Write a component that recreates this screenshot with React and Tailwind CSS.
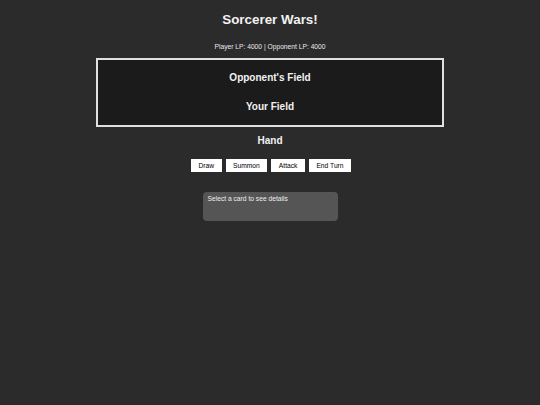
import React from "react";

const buttons = ["Draw", "Summon", "Attack", "End Turn"];

export default function App() {
  return (
    <div className="min-h-[405px] w-full bg-[#2b2b2b] text-[#f2f2f2] flex flex-col items-center font-['Liberation_Sans',Arial,sans-serif]">
      {/* header */}
      <h1 className="mt-[12px] text-[13.4px] leading-[16px] font-bold">Sorcerer Wars!</h1>
      <div className="mt-[15px] text-[6.7px] leading-[8px] text-[#e8e8e8]">Player LP: 4000 | Opponent LP: 4000</div>

      {/* board */}
      <div className="mt-[7px] w-[348px] bg-[#1b1b1b] border-2 border-[#e0e0e0] flex flex-col items-center pt-[12px] pb-[11.5px]">
        <h2 className="text-[10px] leading-[12px] font-bold">Opponent's Field</h2>
        <h2 className="mt-[17px] text-[10px] leading-[12px] font-bold">Your Field</h2>
      </div>

      <h2 className="mt-[8px] text-[10px] leading-[12px] font-bold">Hand</h2>

      {/* actions */}
      <div className="mt-[12.5px] flex gap-[4px] translate-x-[1px]">
        {buttons.map((b) => (
          <button key={b} className="h-[13px] px-[7.5px] bg-white text-black text-[6.7px] leading-[8px]">
            {b}
          </button>
        ))}
      </div>

      {/* card details */}
      <div className="mt-[19.5px] w-[135px] h-[29.5px] bg-[#555555] rounded-[4px] px-[5px] pt-[3.5px] text-[6.7px] leading-[8px] text-[#eeeeee]">
        Select a card to see details
      </div>
    </div>
  );
}
